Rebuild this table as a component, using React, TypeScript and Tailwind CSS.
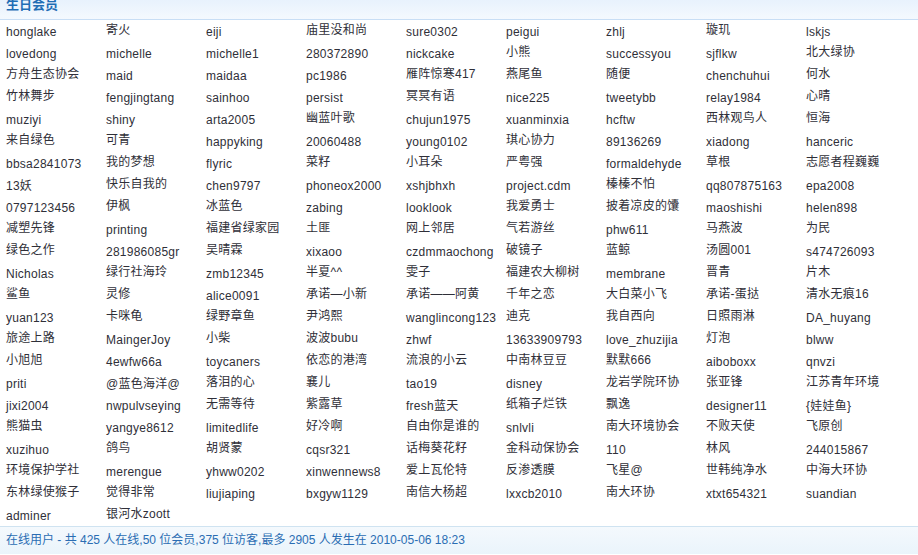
import React from "react";

const names: string[] = [
  "honglake", "寄火", "eiji", "庙里没和尚", "sure0302", "peigui", "zhlj", "璇玑", "lskjs",
  "lovedong", "michelle", "michelle1", "280372890", "nickcake", "小熊", "successyou", "sjflkw", "北大绿协",
  "方舟生态协会", "maid", "maidaa", "pc1986", "雁阵惊寒417", "燕尾鱼", "随便", "chenchuhui", "何水",
  "竹林舞步", "fengjingtang", "sainhoo", "persist", "冥冥有语", "nice225", "tweetybb", "relay1984", "心晴",
  "muziyi", "shiny", "arta2005", "幽蓝叶歌", "chujun1975", "xuanminxia", "hcftw", "西林观鸟人", "恒海",
  "来自绿色", "可青", "happyking", "20060488", "young0102", "琪心协力", "89136269", "xiadong", "hanceric",
  "bbsa2841073", "我的梦想", "flyric", "菜籽", "小耳朵", "严粤强", "formaldehyde", "草根", "志愿者程巍巍",
  "13妖", "快乐自我的", "chen9797", "phoneox2000", "xshjbhxh", "project.cdm", "榛榛不怕", "qq807875163", "epa2008",
  "0797123456", "伊枫", "冰蓝色", "zabing", "looklook", "我爱勇士", "披着凉皮的馕", "maoshishi", "helen898",
  "减塑先锋", "printing", "福建省绿家园", "土匪", "网上邻居", "气若游丝", "phw611", "马燕波", "为民",
  "绿色之作", "281986085gr", "吴晴霖", "xixaoo", "czdmmaochong", "破镜子", "蓝鲸", "汤圆001", "s474726093",
  "Nicholas", "绿行社海玲", "zmb12345", "半夏^^", "雯子", "福建农大柳树", "membrane", "晋青", "片木",
  "鲨鱼", "灵修", "alice0091", "承诺—小新", "承诺——阿黄", "千年之恋", "大白菜小飞", "承诺-蛋挞", "清水无痕16",
  "yuan123", "卡咪龟", "绿野章鱼", "尹鸿熙", "wanglincong123", "迪克", "我自西向", "日照雨淋", "DA_huyang",
  "旅途上路", "MaingerJoy", "小柴", "波波bubu", "zhwf", "13633909793", "love_zhuzijia", "灯泡", "blww",
  "小旭旭", "4ewfw66a", "toycaners", "依恋的港湾", "流浪的小云", "中南林豆豆", "默默666", "aiboboxx", "qnvzi",
  "priti", "@蓝色海洋@", "落泪的心", "襄儿", "tao19", "disney", "龙岩学院环协", "张亚锋", "江苏青年环境",
  "jixi2004", "nwpulvseying", "无需等待", "紫露草", "fresh蓝天", "纸箱子烂铁", "飘逸", "designer11", "{娃娃鱼}",
  "熊猫虫", "yangye8612", "limitedlife", "好冷啊", "自由你是谁的", "snlvli", "南大环境协会", "不败天使", "飞原创",
  "xuzihuo", "鸽鸟", "胡贤蒙", "cqsr321", "话梅葵花籽", "金科动保协会", "110", "林风", "244015867",
  "环境保护学社", "merengue", "yhww0202", "xinwennews8", "爱上瓦伦特", "反渗透膜", "飞星@", "世韩纯净水", "中海大环协",
  "东林绿使猴子", "觉得非常", "liujiaping", "bxgyw1129", "南信大杨超", "lxxcb2010", "南大环协", "xtxt654321", "suandian",
  "adminer", "银河水zoott",
];

const cjk = /^[\u4e00-\u9fff]/;

export default function App() {
  return (
    <div
      className="w-[918px] h-[555px] overflow-hidden bg-white text-[#2f2f38] text-[12px]"
      style={{ fontFamily: '"Liberation Sans", Arial, "Noto Sans CJK SC", sans-serif' }}
    >
      <div className="h-[20px] overflow-hidden border-b border-[#c8def5] bg-gradient-to-b from-[#e8f2fd] to-[#f4f9fe] pl-[6px]">
        <div className="-mt-[5px] leading-[20px] text-[13px] font-bold text-[#1f6db5]">生日会员</div>
      </div>
      <div className="grid grid-cols-[repeat(9,100px)] auto-rows-[22px] tracking-[0.25px]">
        {names.map((n, i) => (
          <div key={i} className="pl-[6px] pt-[2px] leading-[20px] whitespace-nowrap overflow-hidden">
            <span className={cjk.test(n) ? "relative -top-[2px]" : ""}>{n}</span>
          </div>
        ))}
      </div>
      <div className="h-[28px] border-t border-[#cfe3f1] bg-gradient-to-b from-[#f4f9fd] to-[#eaf4fb] pl-[6px] leading-[27px] text-[#2a6db3]">
        在线用户 - 共 425 人在线,50 位会员,375 位访客,最多 2905 人发生在 2010-05-06 18:23
      </div>
    </div>
  );
}
